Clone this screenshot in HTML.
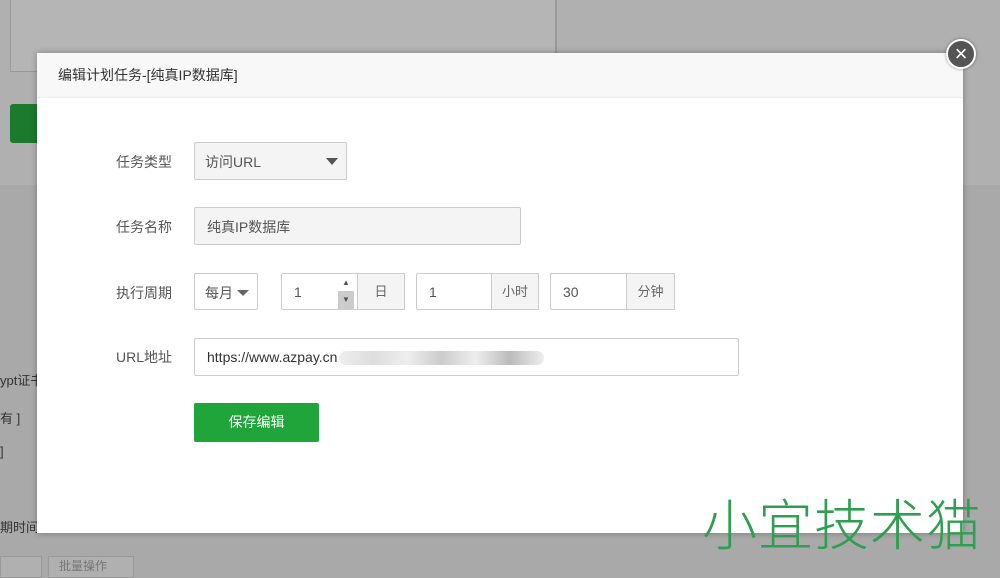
<!DOCTYPE html><html><head><meta charset="utf-8"><style>
body{margin:0;width:1000px;height:571px;background:#a9a9a9;position:relative;overflow:hidden;font-family:"Liberation Sans","Noto Sans CJK SC",sans-serif;font-size:14px;color:#555}
.a{position:absolute}
.box{position:absolute;border:1px solid #ccc;background:#fff;border-radius:2px;box-sizing:border-box}
.lab{position:absolute;font-size:14px;color:#555}
.add{position:absolute;background:#f4f4f4;border:1px solid #ccc;box-sizing:border-box;font-size:13px;color:#666;text-align:center}
</style></head><body>
<div class="a" style="left:0;top:0;width:1000px;height:185px;background:#b0b0b0"></div>
<div class="a" style="left:10px;top:0;width:545px;height:71px;border:1px solid #999;border-top:0;background:#b5b5b5"></div>
<div class="a" style="left:555px;top:0;width:1px;height:53px;background:#999"></div>
<div class="a" style="left:10px;top:104px;width:30px;height:39px;background:#1b7a2e;border-radius:3px"></div>
<div class="a" style="left:0;top:370px;font-size:13px;color:#333">ypt证书</div>
<div class="a" style="left:0;top:408px;font-size:13px;color:#333">有 ]</div>
<div class="a" style="left:0;top:444px;font-size:13px;color:#333">]</div>
<div class="a" style="left:0;top:517px;font-size:13px;color:#333">期时间</div>
<div class="a" style="left:0;top:556px;width:40px;height:20px;border:1px solid #999;background:#b0b0b0"></div>
<div class="a" style="left:48px;top:556px;width:74px;height:20px;border:1px solid #999;background:#b0b0b0;font-size:12px;color:#777;padding-left:10px">批量操作</div>
<div class="a" style="left:37px;top:53px;width:926px;height:480px;background:#fff;box-shadow:0 0 6px rgba(0,0,0,.3)">
 <div style="height:44px;background:#f8f8f8;border-bottom:1px solid #eee;line-height:44px;padding-left:21px;font-size:14px;color:#333">编辑计划任务-[纯真IP数据库]</div>
 <div class="lab" style="left:79px;top:99px">任务类型</div>
 <div class="box" style="left:157px;top:89px;width:153px;height:38px;background:#f4f4f4;padding:9px 0 0 10px">访问URL<span class="a" style="right:8px;top:15px;border:6px solid transparent;border-top:7px solid #555;border-bottom:0"></span></div>
 <div class="lab" style="left:79px;top:164px">任务名称</div>
 <div class="box" style="left:157px;top:154px;width:327px;height:38px;background:#f4f4f4;padding:9px 0 0 12px">纯真IP数据库</div>
 <div class="lab" style="left:79px;top:230px">执行周期</div>
 <div class="box" style="left:157px;top:220px;width:64px;height:37px;padding:9px 0 0 10px">每月<span class="a" style="right:8px;top:16px;border:6px solid transparent;border-top:6px solid #666;border-bottom:0"></span></div>
 <div class="box" style="left:244px;top:220px;width:124px;height:37px;padding:10px 0 0 12px">1</div>
 <div class="a" style="left:301px;top:221px;width:16px;height:17px;font-size:8px;text-align:center;line-height:17px">▲</div>
 <div class="a" style="left:301px;top:238px;width:16px;height:18px;background:#ccc;font-size:8px;text-align:center;line-height:18px">▼</div>
 <div class="add" style="left:320px;top:220px;width:48px;height:37px;line-height:35px">日</div>
 <div class="box" style="left:379px;top:220px;width:123px;height:37px;padding:10px 0 0 12px">1</div>
 <div class="add" style="left:454px;top:220px;width:48px;height:37px;line-height:35px">小时</div>
 <div class="box" style="left:513px;top:220px;width:125px;height:37px;padding:10px 0 0 12px">30</div>
 <div class="add" style="left:589px;top:220px;width:49px;height:37px;line-height:35px">分钟</div>
 <div class="lab" style="left:79px;top:294px">URL地址</div>
 <div class="box" style="left:157px;top:285px;width:545px;height:38px;padding:10px 0 0 12px;color:#333">https://www.azpay.cn<span style="display:inline-block;width:205px;height:14px;vertical-align:middle;background:linear-gradient(90deg,#eee,#ddd,#eee,#ccc,#eee,#bbb,#eee);border-radius:7px;margin-left:2px"></span></div>
 <div class="a" style="left:157px;top:350px;width:125px;height:39px;background:#20a53a;border-radius:2px;color:#fff;text-align:center;line-height:39px;font-size:14px">保存编辑</div>
</div>
<div class="a" style="left:946px;top:39px;width:26px;height:26px;border-radius:50%;background:#555;border:2px solid #fff;color:#fff;text-align:center;line-height:26px;font-size:22px;box-shadow:0 0 3px rgba(0,0,0,.4)">×</div>
<div class="a" style="left:702px;top:481px;font-size:55px;color:#2e9e50;font-family:'Noto Sans CJK SC',sans-serif;font-weight:300;letter-spacing:1px">小宜技术猫</div>
</body></html>
